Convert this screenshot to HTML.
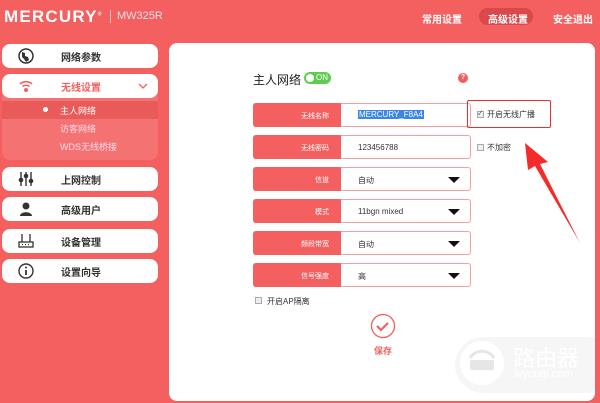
<!DOCTYPE html>
<html><head><meta charset="utf-8"><style>
*{margin:0;padding:0;box-sizing:border-box}
body{width:600px;height:403px;background:#f45f5f;font-family:"Liberation Sans","Noto Sans CJK SC",sans-serif;position:relative;overflow:hidden}
.abs{position:absolute}
.logo{left:4px;top:7px;color:#fff;font-weight:bold;font-size:17px;letter-spacing:1.2px}
.model{left:117px;top:10px;color:#fde;font-size:11px}
.sep{left:110px;top:10px;width:1px;height:13px;background:#fbb}
.top{top:11px;color:#fff;font-size:10px;font-weight:bold}
.nav{left:2px;width:156px;height:24px;background:#fff;border-radius:8px;font-size:10px;font-weight:bold;color:#333}
.nav span{position:absolute;left:59px;top:5px}
.nav svg{position:absolute;left:16px;top:4px}
.panel{left:169px;top:43px;width:426px;height:358px;background:#fff;border-radius:8px;overflow:hidden}
.row{left:253px;width:218px;height:24px;border:1px solid #f2a0a0;border-radius:3px;background:#fff}
.row .l{position:absolute;left:-1px;top:-1px;width:88px;height:24px;background:#f45f5f;border-radius:3px 0 0 3px;color:#fff;font-size:7px;text-align:right;padding:8px 12px 0 0}
.row .v{position:absolute;left:104px;top:7px;font-size:8px;color:#333}
.row .a{position:absolute;right:10px;top:9px;width:0;height:0;border-left:6px solid transparent;border-right:6px solid transparent;border-top:6px solid #111}
.cb{width:7px;height:7px;border:1px solid #aaa;background:#eee}
</style></head><body>
<div class="abs logo">MERCURY<sup style="font-size:5px">®</sup></div>
<div class="abs sep"></div>
<div class="abs model">MW325R</div>
<div class="abs top" style="left:422px">常用设置</div>
<div class="abs" style="left:479px;top:8px;width:54px;height:17px;background:#d9484b;border-radius:9px"></div>
<div class="abs top" style="left:488px">高级设置</div>
<div class="abs top" style="left:553px">安全退出</div>

<div class="abs nav" style="top:44px"><svg width="16" height="16" viewBox="0 0 16 16"><circle cx="8" cy="8" r="7" fill="none" stroke="#333" stroke-width="1.5"/><path d="M4 4l3 1 0 3 3 1 1 3-3 2-2-3-2-2z" fill="#333"/></svg><span>网络参数</span></div>
<div class="abs" style="left:2px;top:74px;width:156px;height:86px;background:#f57272;border-radius:8px"></div>
<div class="abs nav" style="top:74px;color:#f45f5f"><svg width="16" height="16" viewBox="0 0 16 16" fill="none" stroke="#f45f5f" stroke-width="1.6"><path d="M2 6a9 9 0 0 1 12 0M4.5 8.5a5.5 5.5 0 0 1 7 0"/><circle cx="8" cy="12" r="1.2" fill="#f45f5f"/></svg><span>无线设置</span><svg style="left:136px;top:8px" width="10" height="8"><path d="M1 2l4 4 4-4" stroke="#f45f5f" fill="none" stroke-width="1.3"/></svg></div>
<div class="abs" style="left:2px;top:101px;width:156px;height:18px;background:#e95a5b"></div>
<div class="abs" style="left:43px;top:107px;width:5px;height:5px;border-radius:50%;background:#fff"></div>
<div class="abs" style="left:60px;top:104px;color:#fff;font-size:9px">主人网络</div>
<div class="abs" style="left:60px;top:122px;color:#fde;font-size:9px">访客网络</div>
<div class="abs" style="left:60px;top:140px;color:#fde;font-size:9px">WDS无线桥接</div>
<div class="abs nav" style="top:167px"><svg width="16" height="16" viewBox="0 0 16 16" stroke="#333" stroke-width="1.4"><path d="M3 1v14M8 1v14M13 1v14"/><circle cx="3" cy="9" r="1.6" fill="#333"/><circle cx="8" cy="5" r="1.6" fill="#333"/><circle cx="13" cy="10" r="1.6" fill="#333"/></svg><span>上网控制</span></div>
<div class="abs nav" style="top:197px"><svg width="16" height="16" viewBox="0 0 16 16" fill="#333"><circle cx="8" cy="5" r="3.5"/><path d="M2 15c0-5 12-5 12 0z"/></svg><span>高级用户</span></div>
<div class="abs nav" style="top:229px"><svg width="16" height="16" viewBox="0 0 16 16" fill="none" stroke="#333" stroke-width="1.3"><path d="M4 1v8M12 1v8"/><rect x="1" y="9" width="14" height="5"/><path d="M4 11.5h1M7 11.5h1M10 11.5h1"/></svg><span>设备管理</span></div>
<div class="abs nav" style="top:259px"><svg width="16" height="16" viewBox="0 0 16 16"><circle cx="8" cy="8" r="7" fill="none" stroke="#333" stroke-width="1.4"/><circle cx="8" cy="4.5" r="1" fill="#333"/><path d="M8 7v5" stroke="#333" stroke-width="1.8"/></svg><span>设置向导</span></div>

<div class="abs panel">
<svg class="abs" style="left:0;top:0" width="426" height="358">
<rect x="286" y="294" width="160" height="56" rx="28" fill="#f6f6f6"/>
<circle cx="313" cy="320" r="22" fill="#fff"/>
<path d="M301 315a14 14 0 0 1 24 0" fill="none" stroke="#e6e6e6" stroke-width="3"/>
<rect x="301" y="317" width="24" height="10" rx="2" fill="#e6e6e6"/>
</svg>
</div>
<div class="abs" style="left:253px;top:71px;font-size:12px;color:#222">主人网络</div>
<div class="abs" style="left:304px;top:72px;width:27px;height:12px;border-radius:6px;background:#5fcc4f;color:#fff;font-size:8px;padding:1px 0 0 12px">ON</div>
<div class="abs" style="left:306px;top:74px;width:8px;height:8px;border-radius:50%;background:#fff"></div>
<div class="abs" style="left:458px;top:73px;width:10px;height:10px;border-radius:50%;background:#f25d5d;color:#fff;font-size:7px;text-align:center;line-height:10px;font-weight:bold">?</div>

<div class="abs row" style="top:103px"><div class="l">无线名称</div><div class="v" style="background:#3b86e8;color:#fff;left:104px;top:6px;padding:0 1px">MERCURY_F8A4</div></div>
<div class="abs row" style="top:135px"><div class="l">无线密码</div><div class="v">123456788</div></div>
<div class="abs row" style="top:167px"><div class="l">信道</div><div class="v">自动</div><div class="a"></div></div>
<div class="abs row" style="top:199px"><div class="l">模式</div><div class="v">11bgn mixed</div><div class="a"></div></div>
<div class="abs row" style="top:231px"><div class="l">频段带宽</div><div class="v">自动</div><div class="a"></div></div>
<div class="abs row" style="top:263px"><div class="l">信号强度</div><div class="v">高</div><div class="a"></div></div>

<div class="abs" style="left:467px;top:100px;width:84px;height:28px;border:1.5px solid #f02a2a;border-radius:2px"></div>
<div class="abs cb" style="left:477px;top:111px;font-size:6px;line-height:5px;color:#333">✓</div>
<div class="abs" style="left:487px;top:109px;font-size:8px;color:#333">开启无线广播</div>
<div class="abs cb" style="left:477px;top:144px"></div>
<div class="abs" style="left:487px;top:142px;font-size:8px;color:#333">不加密</div>
<div class="abs cb" style="left:255px;top:297px"></div>
<div class="abs" style="left:267px;top:296px;font-size:8px;color:#333">开启AP隔离</div>

<svg class="abs" style="left:0;top:0" width="600" height="403">
<path d="M525 143 L548 162 L540 164 L580 243 L535 166 L528 170 Z" fill="#f52a2a"/>
<circle cx="383" cy="326" r="11.5" fill="none" stroke="#f45f5f" stroke-width="1.3"/>
<path d="M377 326l4 4 7-7" fill="none" stroke="#f45f5f" stroke-width="2.2"/>
</svg>
<div class="abs" style="left:374px;top:344px;font-size:9px;color:#f45f5f;font-weight:bold">保存</div>
<div class="abs" style="left:513px;top:341px;font-size:22px;color:#fff">路由器</div>
<div class="abs" style="left:514px;top:368px;font-size:11px;color:#fff">luyouqi.com</div>
</body></html>
